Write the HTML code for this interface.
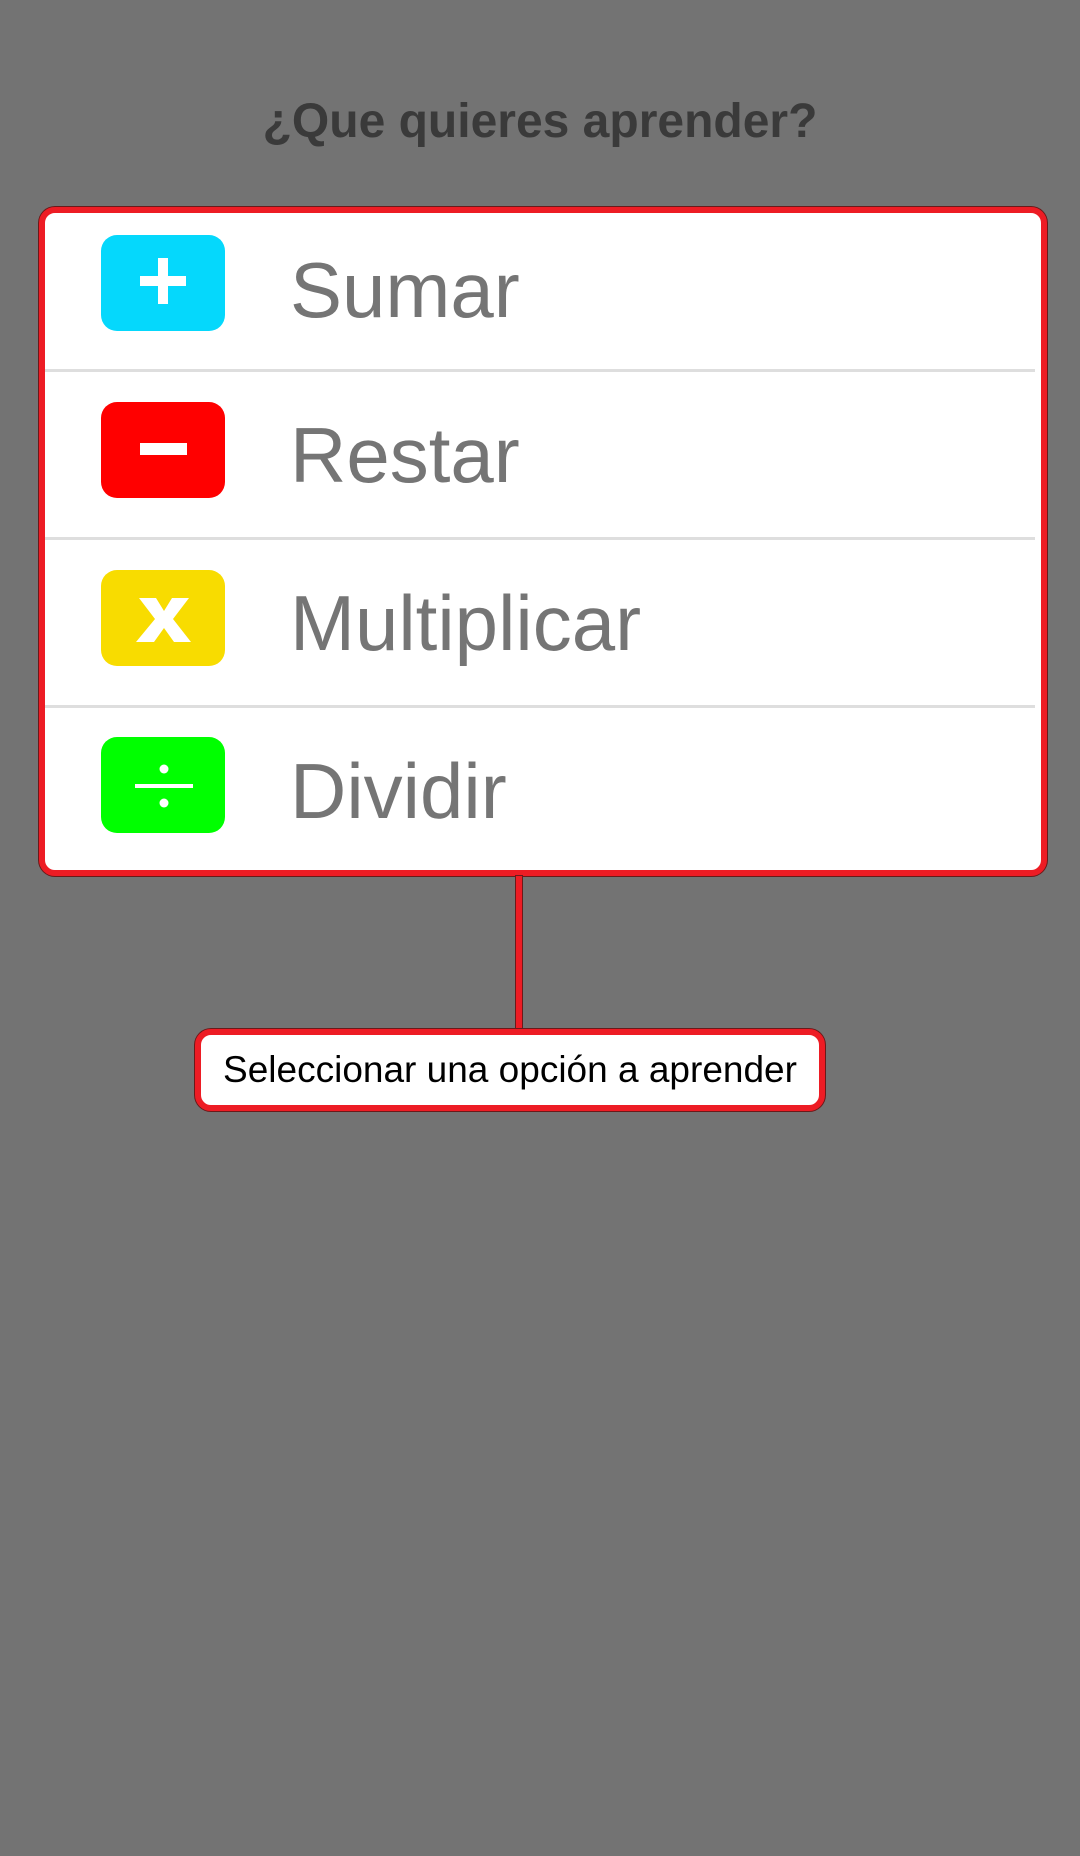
<!DOCTYPE html>
<html><head><meta charset="utf-8"><style>
html,body{margin:0;padding:0;}
body{width:1080px;height:1856px;background:#737373;position:relative;overflow:hidden;font-family:"Liberation Sans",sans-serif;}
.title{position:absolute;left:0;width:1080px;top:92px;text-align:center;font-size:48px;font-weight:bold;color:#3a3a3a;line-height:60px;}
.card{position:absolute;left:39px;top:207px;width:996px;height:657px;background:#fff;border:6px solid #ed1c24;border-radius:16px;box-shadow:0 0 0 1px #6a1a1a;}
.div{position:absolute;left:0;width:990px;height:3px;background:#dedede;}
.ic{position:absolute;left:56px;width:124px;height:96px;border-radius:16px;line-height:0;}
.ic svg{display:block;}
.lbl{position:absolute;left:245px;font-size:78px;color:#757575;line-height:80px;}
.line{position:absolute;left:516px;top:876px;width:6px;height:154px;background:#ed1c24;box-shadow:0 0 0 1px #6a1a1a;}
.tip{position:absolute;left:195px;top:1029px;width:618px;height:70px;background:#fff;border:6px solid #ed1c24;border-radius:16px;box-shadow:0 0 0 1px #6a1a1a;font-size:37px;color:#000;line-height:70px;text-align:center;}
</style></head><body>
<div class="title">¿Que quieres aprender?</div>
<div class="card">
  <div class="ic" style="top:22px;background:#05d8fc;">
    <svg width="124" height="96" viewBox="0 0 124 96"><rect x="39" y="41" width="46" height="10" fill="#fff"/><rect x="57" y="23" width="10" height="46" fill="#fff"/></svg>
  </div>
  <div class="lbl" style="top:37px;">Sumar</div>
  <div class="div" style="top:156px;"></div>
  <div class="ic" style="top:189px;background:#ff0000;">
    <svg width="124" height="96" viewBox="0 0 124 96"><rect x="39" y="41" width="47" height="12" fill="#fff"/></svg>
  </div>
  <div class="lbl" style="top:202px;">Restar</div>
  <div class="div" style="top:324px;"></div>
  <div class="ic" style="top:357px;background:#f8dc00;">
    <svg width="124" height="96" viewBox="0 0 124 96"><path d="M38 28H55L63 41L71 28H88L72 49L90 72H73L63 58L53 72H35L54 49Z" fill="#fff"/></svg>
  </div>
  <div class="lbl" style="top:370px;">Multiplicar</div>
  <div class="div" style="top:492px;"></div>
  <div class="ic" style="top:524px;background:#00ff00;">
    <svg width="124" height="96" viewBox="0 0 124 96"><circle cx="63" cy="32" r="4.5" fill="#fff"/><rect x="34" y="47" width="58" height="4" fill="#fff"/><circle cx="63" cy="66" r="4.5" fill="#fff"/></svg>
  </div>
  <div class="lbl" style="top:538px;">Dividir</div>
</div>
<div class="line"></div>
<div class="tip">Seleccionar una opción a aprender</div>
</body></html>
